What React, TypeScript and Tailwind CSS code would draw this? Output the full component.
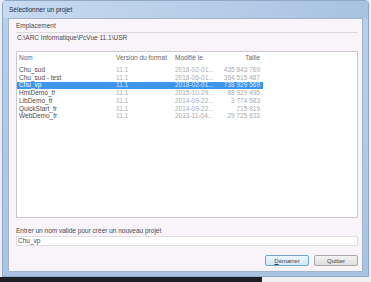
import React from 'react';

interface Projet {
    nom: string;
    version: string;
    modifie: string;
    taille: string;
}

const projets: Projet[] = [
    { nom: 'Chu_sud', version: '11.1', modifie: '2018-02-01...', taille: '435 843 769' },
    { nom: 'Chu_sud - test', version: '11.1', modifie: '2018-06-01...', taille: '364 515 487' },
    { nom: 'Chu_vp', version: '11.1', modifie: '2018-02-01...', taille: '738 929 569' },
    { nom: 'HmiDemo_fr', version: '11.1', modifie: '2015-10-29...', taille: '88 929 495' },
    { nom: 'LibDemo_fr', version: '11.1', modifie: '2014-09-22...', taille: '3 774 683' },
    { nom: 'QuickStart_fr', version: '11.1', modifie: '2014-09-22...', taille: '715 819' },
    { nom: 'WebDemo_fr', version: '11.1', modifie: '2013-11-04...', taille: '29 725 633' },
];

const SELECTED = 'Chu_vp';

export default function App() {
    return (
        <div
            className="w-[371px] h-[282px] flex flex-col overflow-hidden bg-[#e9eef3] text-[6.5px] leading-[8px] text-[#444]"
            style={{ fontFamily: '"Liberation Sans", Arial, sans-serif' }}
        >
            {/* window */}
            <div className="ml-[2px] w-[367px] h-[277px] flex flex-col rounded-t-[4px] border border-[#8ea8c6] bg-gradient-to-b from-[#b9d0ea] to-[#a9c3e2]">
                {/* title bar */}
                <div className="h-[17px] flex items-center pl-[6px] text-[6.5px] text-[#1e2a38] bg-gradient-to-r from-[#c8daef] via-[#b8cfe9] to-[#a8c2e2]">
                    Sélectionner un projet
                </div>

                {/* client area */}
                <div className="mx-[5px] mb-[4px] flex-1 flex flex-col pl-[7px] pr-[4px] pt-[3px] bg-[#f9f4f9] border border-[#9fb4cd]">
                    <div className="h-[8px] text-[#4a4a4a]">Emplacement</div>
                    <div className="mt-[2px] h-[10px] flex items-center pl-[1px] border-t border-[#dcd8dc] text-[#4a4a4a]">
                        C:\ARC Informatique\PcVue 11.1\USR
                    </div>

                    {/* list */}
                    <div className="mt-[9px] h-[167px] bg-white border border-[#ccc8cc]">
                        <div className="h-[14px] w-[246px] flex pt-[2px] text-[#666]">
                            <div className="w-[99px] pl-[2px]">Nom</div>
                            <div className="w-[59px]">Version du format</div>
                            <div className="w-[43px]">Modifié le</div>
                            <div className="w-[45px] pr-[3px] text-right">Taille</div>
                        </div>
                        {projets.map(p => {
                            const sel = p.nom === SELECTED;
                            return (
                                <div
                                    key={p.nom}
                                    className={`h-[7.75px] w-[246px] flex items-center ${sel ? 'bg-[#3d95ec] text-white' : ''}`}
                                >
                                    <div className={`w-[99px] pl-[2px] ${sel ? '' : 'text-[#4a4a4a]'}`}>{p.nom}</div>
                                    <div className={`w-[59px] ${sel ? 'text-[#dceaff]' : 'text-[#ababab]'}`}>{p.version}</div>
                                    <div className={`w-[43px] whitespace-nowrap ${sel ? 'text-[#dceaff]' : 'text-[#ababab]'}`}>{p.modifie}</div>
                                    <div className={`w-[45px] pr-[3px] text-right ${sel ? 'text-[#dceaff]' : 'text-[#ababab]'}`}>{p.taille}</div>
                                </div>
                            );
                        })}
                    </div>

                    <div className="mt-[9px] h-[8px] text-[#4a4a4a]">Entrer un nom valide pour créer un nouveau projet</div>
                    <div className="mt-[1px] h-[10px] flex items-center pl-[1px] bg-white border border-[#e0dce0] text-[#4a4a4a]">
                        Chu_vp
                    </div>

                    {/* buttons */}
                    <div className="mt-[9px] flex justify-end gap-[5px]">
                        <button className="w-[44px] h-[11px] flex items-center justify-center rounded-[2px] border border-[#6aa5d6] bg-gradient-to-b from-[#eef7fe] to-[#cfe6f8] text-[6px] text-[#444]">
                            <span><span className="underline">D</span>émarrer</span>
                        </button>
                        <button className="w-[44px] h-[11px] flex items-center justify-center rounded-[2px] border border-[#a8a8a8] bg-gradient-to-b from-[#f4f4f4] to-[#dedede] text-[6px] text-[#444]">
                            Quitter
                        </button>
                    </div>
                </div>
            </div>

            {/* desktop strip */}
            <div className="flex-1 flex">
                <div className="w-[262px] bg-[#1c1f23]" />
                <div className="flex-1 bg-[#eef0f2]" />
            </div>
        </div>
    );
}
